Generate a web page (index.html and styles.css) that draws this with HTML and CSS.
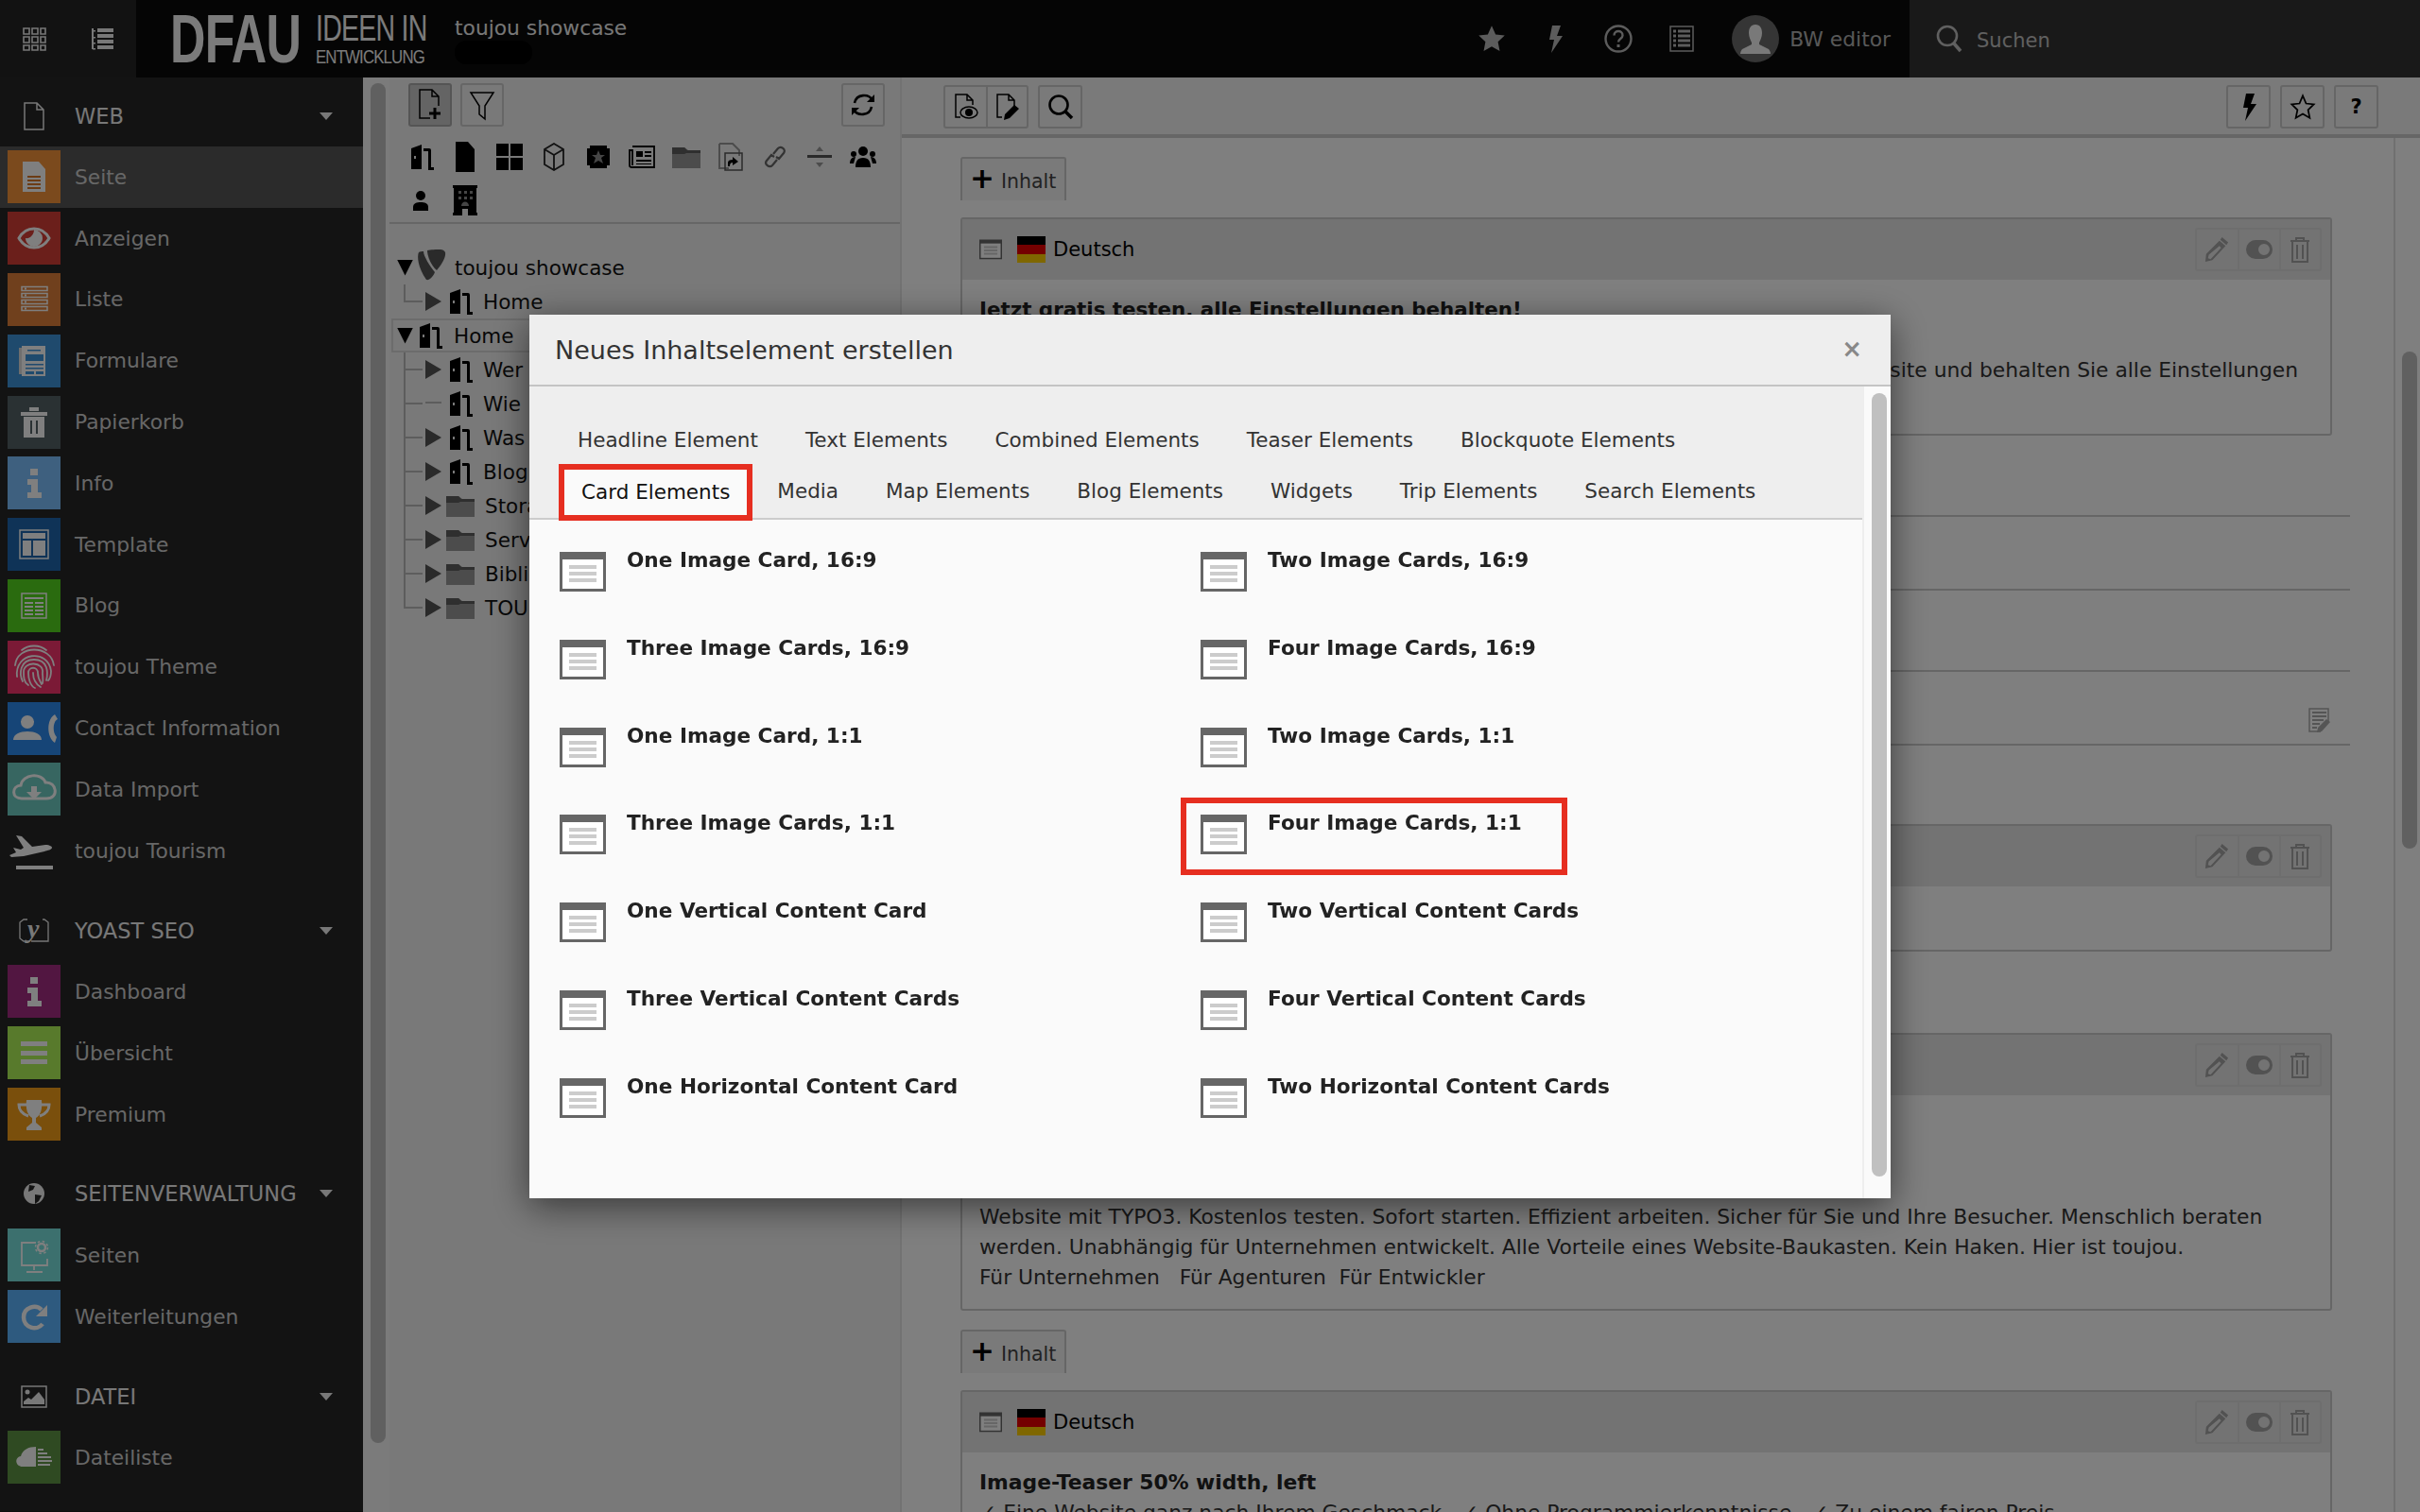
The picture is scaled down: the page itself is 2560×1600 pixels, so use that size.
FILE: index.html
```html
<!DOCTYPE html>
<html lang="de">
<head>
    <meta charset="UTF-8">
    <title>TYPO3 Backend - Neues Inhaltselement</title>
    <link rel="stylesheet" href="styles.css">
</head>
<body>
    <svg class="defs" width="0" height="0">
        <defs>
            <symbol id="door" viewBox="0 0 28 28"><path d="M0 27h4V5l11-4v26H0v-2zM7 13h2v3H7z" fill-rule="evenodd"/><path d="M17 5h6a2 2 0 0 1 2 2v18h3v3h-6V8h-5z"/></symbol>
            <symbol id="folder" viewBox="0 0 30 24"><path d="M0 2h13l4 3h13v19H0z" fill="#999"/><path d="M0 2h13l3 3h14v3H15l-2 1H0z" fill="#5f5f5f"/></symbol>
            <symbol id="content" viewBox="0 0 49 42"><rect x="1.5" y="1.5" width="46" height="39" fill="#fff" stroke="#666" stroke-width="3"/><rect y="0" width="49" height="8" fill="#666"/><path d="M10 16h29M10 23h29M10 30h29" stroke="#ccc" stroke-width="4"/></symbol>
            <symbol id="pencil" viewBox="0 0 28 30"><path d="M17 5l7 6L9 27l-8 2 1-9zM5 21l-1 4 3 1 12-13-2-2zM20 1l7 6-2 3-7-6z" fill-rule="evenodd"/></symbol>
            <symbol id="toggle" viewBox="0 0 28 20"><path d="M10 0h8a10 10 0 0 1 0 20h-8a10 10 0 0 1 0-20zm9 4a6 6 0 1 0 0 12 6 6 0 0 0 0-12z" fill-rule="evenodd"/></symbol>
            <symbol id="trash" viewBox="0 0 22 28"><path d="M1 5h20M7 5V2h8v3M3 5v22h16V5M8 9v15M14 9v15" fill="none" stroke="currentColor" stroke-width="2"/></symbol>
            <symbol id="info" viewBox="0 0 56 56"><path d="M24 13h8v7h-8zM21 24h11v14h4v6H21v-6h4v-8h-4z"/></symbol>
        </defs>
    </svg>

    <header class="topbar">
        <div class="top-switch">
            <svg class="top-switch-icon" viewBox="0 0 25 25" fill="none" stroke="currentColor" stroke-width="1.6"><path d="M1 1h6v6H1zM10 1h6v6h-6zM19 1h5v6h-5zM1 10h6v6H1zM10 10h6v6h-6zM19 10h5v6h-5zM1 19h6v5H1zM10 19h6v5h-6zM19 19h5v5h-5z"/></svg>
            <svg class="top-switch-icon" viewBox="0 0 25 25" fill="currentColor"><path d="M1 1h2v22H1zM2 3h3v1.500H2zM2 10h3v1.500H2zM2 16h3v1.500H2zM2 22h3v1.500H2zM7 1h17v4H7zM7 7h17v4H7zM7 13h17v4H7zM7 19h17v4H7z"/></svg>
        </div>
        <div class="logo">
            <span class="logo-big">DFAU</span>
            <span class="logo-small"><span class="logo-line1">IDEEN IN</span><span class="logo-line2">ENTWICKLUNG</span></span>
        </div>
        <div class="site-name">
            <span>toujou showcase</span>
            <span class="site-blob"></span>
        </div>
        <div class="top-tools">
            <span class="top-tool"><svg width="30" height="30" viewBox="0 0 24 24" fill="currentColor"><path d="M12 1l3.300 7.300 7.700.9-5.700 5.300 1.500 7.900-6.800-3.900-6.800 3.900 1.500-7.900L1 9.200l7.700-.9z"/></svg></span>
            <span class="top-tool"><svg width="30" height="30" viewBox="0 0 24 30" fill="currentColor"><path d="M9 1h9l-4 11h6L8 30l3-14H6z"/></svg></span>
            <span class="top-tool"><svg width="30" height="30" viewBox="0 0 30 30" fill="none" stroke="currentColor" stroke-width="2.400"><circle cx="15" cy="15" r="13.500"/><path d="M10.500 11.500c0-6 9-6 9 0 0 3.500-4.500 3.500-4.500 7"/><path d="M13.500 21h3v3h-3z" fill="currentColor" stroke="none"/></svg></span>
            <span class="top-tool"><svg width="26" height="30" viewBox="0 0 26 30" fill="none" stroke="currentColor" stroke-width="1.500"><path d="M1 2h24v26H1z"/><path d="M4 7h3M9 7h13M4 12h3M9 12h13M4 17h3M9 17h13M4 22h3M9 22h13" stroke-width="3"/></svg></span>
            <span class="avatar"><svg width="50" height="50" viewBox="0 0 50 50" fill="currentColor"><path d="M25 10c5 0 7 4 7 9 0 4-2 8-3 10v2l10 5c1 1 2 3 2 5H9c0-2 1-4 2-5l10-5v-2c-1-2-3-6-3-10 0-5 2-9 7-9z"/></svg></span>
            <span class="user-name">BW editor</span>
        </div>
        <div class="top-search">
            <svg width="28" height="30" viewBox="0 0 28 30" fill="none" stroke="currentColor" stroke-width="2.600"><circle cx="12" cy="12" r="10"/><path d="M19 20l7 8" stroke-width="3.500"/></svg>
            <span class="search-label">Suchen</span>
        </div>
    </header>

    <div class="shell">
        <nav class="sidebar">
            <div class="mod-group">
                <div class="mod-head">
                    <span class="head-icon"><svg width="24" height="30" viewBox="0 0 24 30" fill="none" stroke="currentColor" stroke-width="1.500"><path d="M2 1h13l7 7v21H2zM15 1v7h7"/></svg></span>
                    <span class="head-label">WEB</span><span class="caret"></span>
                </div>
                <a class="mod active"><span class="mod-icon c-page"><svg viewBox="0 0 56 56"><path d="M16 12h17l7 8v24H16z" fill="#fff"/><path d="M21 28h14M21 32h14M21 36h14M21 40h14" stroke="#d9782a" stroke-width="2"/></svg></span><span>Seite</span></a>
                <a class="mod"><span class="mod-icon c-view"><svg viewBox="0 0 56 56"><path d="M12 28c4-7 10-10 16-10s12 3 16 10c-4 7-10 10-16 10s-12-3-16-10z" fill="none" stroke="#fff" stroke-width="3"/><path d="M28 19a9 9 0 1 1-9 9c4 1 9-3 9-9z" fill="#fff"/></svg></span><span>Anzeigen</span></a>
                <a class="mod"><span class="mod-icon c-list"><svg viewBox="0 0 56 56" fill="none" stroke="#fff"><path d="M15 14.500h27v4H15zM15 21.500h27v4H15zM15 28.500h27v4H15zM15 35.500h27v4H15z" stroke-width="1.500"/><path d="M18 16.500h2M18 23.500h2M18 30.500h2M18 37.500h2" stroke-width="2"/></svg></span><span>Liste</span></a>
                <a class="mod"><span class="mod-icon c-form"><svg viewBox="0 0 56 56"><path d="M12 14h3v28h-3z" fill="#ddd"/><path d="M15 12h25v32H15z" fill="#fff"/><path d="M21 16h14v1.500H21zM19 21h19v7H19zM19 31h19v1.500H19zM19 35h19v1.500H19zM19 39h9v3h-9zM30 39h8v3h-8z" fill="#3e94da"/></svg></span><span>Formulare</span></a>
                <a class="mod"><span class="mod-icon c-trash"><svg viewBox="0 0 56 56"><path d="M14 17h28v4H14zM23 12h10v4H23zM17 22h22v22H17z" fill="#fff"/><path d="M25 26v14M31 26v14" stroke="#546266" stroke-width="2"/></svg></span><span>Papierkorb</span></a>
                <a class="mod"><span class="mod-icon c-info"><svg viewBox="0 0 56 56" fill="#fff"><use href="#info"/></svg></span><span>Info</span></a>
                <a class="mod"><span class="mod-icon c-tpl"><svg viewBox="0 0 56 56"><path d="M13 13h30v30H13z" fill="none" stroke="#fff" stroke-width="1.500"/><path d="M16 16h24v6H16zM16 24h9v16h-9zM27 24h13v16H27z" fill="#fff"/></svg></span><span>Template</span></a>
                <a class="mod"><span class="mod-icon c-blog"><svg viewBox="0 0 56 56" fill="none" stroke="#fff"><path d="M15 15h26v26H15z" stroke-width="1.500"/><path d="M18 20h20M18 25h9M29 25h9M18 29h9M29 29h9M18 33h9M29 33h9M18 37h9M29 37h9" stroke-width="2"/></svg></span><span>Blog</span></a>
                <a class="mod"><span class="mod-icon c-theme"><svg viewBox="0 0 56 56" fill="none" stroke="#fff" stroke-width="1.800" stroke-linecap="round"><path d="M15 10c7-6 19-6 26 0M8 26c2-22 38-22 41 0M10 38c-3-26 33-30 36-6 0 5-1 8-3 10M16 43c-4-8-3-23 12-23s15 14 13 22M22 47c-5-3-5-9-5-14 0-12 22-11 20 1 0 4 1 7 0 11M29 50c-5-2-7-10-7-16 0-7 10-7 10 0 0 6 3 10 4 12M27 34c0 6 3 12 8 15"/></svg></span><span>toujou Theme</span></a>
                <a class="mod"><span class="mod-icon c-contact"><svg viewBox="0 0 56 56" fill="#fff"><circle cx="21" cy="21" r="7"/><path d="M6 40c0-6 7-9 15-9s15 3 15 9z"/><path d="M50 13l3 5c-5 2-6 14-1 19l-2 6c-9-6-9-25 0-30z"/></svg></span><span>Contact Information</span></a>
                <a class="mod"><span class="mod-icon c-data"><svg viewBox="0 0 56 56"><path d="M15 38c-11 0-11-13-1-14 2-12 22-14 26-3 12-1 15 17 1 17z" fill="none" stroke="#fff" stroke-width="3"/><path d="M25 25h6v6h5l-8 8-8-8h5z" fill="#fff"/></svg></span><span>Data Import</span></a>
                <a class="mod"><span class="mod-icon c-plain"><svg viewBox="0 0 56 56" fill="#fff"><path d="M9 12l6 1 11 11 14-2c5 0 7 2 7 3 0 2-5 3-8 4l-22 5-13 1-2-2 7-3-3-5 4 1 4 1 3-2z"/><path d="M9 44h39v4H9z"/></svg></span><span>toujou Tourism</span></a>
            </div>
            <div class="mod-group">
                <div class="mod-head">
                    <span class="head-icon"><svg width="34" height="36" viewBox="0 0 34 36"><path d="M10 6H6L2 9v17l4 3h6M26 6h2l4 3v20H14" fill="none" stroke="currentColor" stroke-width="1.300"/><text x="10" y="25" font-family="Liberation Serif" font-style="italic" font-weight="bold" font-size="28" fill="currentColor">y</text></svg></span>
                    <span class="head-label">YOAST SEO</span><span class="caret"></span>
                </div>
                <a class="mod"><span class="mod-icon c-dash"><svg viewBox="0 0 56 56" fill="#fff"><use href="#info"/></svg></span><span>Dashboard</span></a>
                <a class="mod"><span class="mod-icon c-over"><svg viewBox="0 0 56 56" fill="#fff"><path d="M14 16h28v5H14zM14 26h28v5H14zM14 35h28v5H14z"/></svg></span><span>Übersicht</span></a>
                <a class="mod"><span class="mod-icon c-prem"><svg viewBox="0 0 56 56"><path d="M20 13h16c1 10-1 16-6 19v5l6 5v3H20v-3l6-5v-5c-5-3-7-9-6-19z" fill="#fff"/><path d="M20 18h-8c0 7 4 10 10 12M36 18h8c0 7-4 10-10 12" fill="none" stroke="#fff" stroke-width="3"/></svg></span><span>Premium</span></a>
            </div>
            <div class="mod-group">
                <div class="mod-head">
                    <span class="head-icon"><svg width="24" height="24" viewBox="0 0 24 24"><circle cx="12" cy="12" r="11" fill="currentColor"/><path d="M7 3l6 1-2 4-5 2zM13 13l7 1-3 6-4 3z" fill="#262626"/></svg></span>
                    <span class="head-label">SEITENVERWALTUNG</span><span class="caret"></span>
                </div>
                <a class="mod"><span class="mod-icon c-pages"><svg viewBox="0 0 56 56"><path d="M30 15H15v24h27v-7M28 39v5M20 46h17" fill="none" stroke="#fff" stroke-width="1.800"/><circle cx="36" cy="20" r="4" fill="none" stroke="#fff" stroke-width="2.500"/><circle cx="36" cy="20" r="6.500" fill="none" stroke="#fff" stroke-width="1.500" stroke-dasharray="2.500 2.600"/></svg></span><span>Seiten</span></a>
                <a class="mod"><span class="mod-icon c-redir"><svg viewBox="0 0 56 56"><path d="M36 21c-6-6-19-3-19 8s14 15 20 7" fill="none" stroke="#fff" stroke-width="4.500"/><path d="M30 28h12V16z" fill="#fff"/></svg></span><span>Weiterleitungen</span></a>
            </div>
            <div class="mod-group last">
                <div class="mod-head">
                    <span class="head-icon"><svg width="28" height="24" viewBox="0 0 28 24"><path d="M1 1h26v22H1z" fill="none" stroke="currentColor" stroke-width="1.500"/><circle cx="7" cy="7" r="2.500" fill="currentColor"/><path d="M3 20v-3l5-4 3 2 8-8 6 8v5z" fill="currentColor"/></svg></span>
                    <span class="head-label">DATEI</span><span class="caret"></span>
                </div>
                <a class="mod"><span class="mod-icon c-file"><svg viewBox="0 0 56 56" fill="#fff"><path d="M30 17v21H16c-8 0-9-10-2-11 2-7 8-10 16-10z"/><path d="M32 19h6v2h-6zM32 23h10v2H32zM32 27h14v2H32zM32 31h15v2H32zM32 35h13v2H32z"/></svg></span><span>Dateiliste</span></a>
            </div>
        </nav>

        <div class="side-scroll"><div class="side-thumb"></div></div>

        <aside class="tree-panel">
            <div class="tree-buttons">
                <div class="btn-row">
                    <span class="tbtn pressed"><svg width="26" height="34" viewBox="0 0 26 34" fill="none" stroke="#000" stroke-width="1.500"><path d="M13 31H2V1h13l7 7v10M15 1v7h7"/><path d="M18 20v12M12 26h12" stroke-width="3"/></svg></span>
                    <span class="tbtn"><svg width="28" height="34" viewBox="0 0 28 34" fill="none" stroke="#000" stroke-width="1.500"><path d="M2 4h24l-9 14v14l-6-5v-9z"/></svg></span>
                </div>
                <span class="tbtn wide"><svg width="28" height="28" viewBox="0 0 28 28" fill="none" stroke="#000" stroke-width="2.600"><path d="M5 12c2-10 15-10 19-3M23 16c-2 10-15 10-19 3"/><path d="M26 3v8h-8zM2 25v-8h8z" fill="#000" stroke="none"/></svg></span>
            </div>
            <div class="tree-types">
                <span class="ttype"><svg width="28" height="28"><use href="#door"/></svg></span>
                <span class="ttype"><svg width="22" height="32" viewBox="0 0 22 32"><path d="M1 0h13l7 8v24H1z"/></svg></span>
                <span class="ttype"><svg width="28" height="28" viewBox="0 0 28 28"><path d="M0 0h13v13H0zM15 0h13v13H15zM0 15h13v13H0zM15 15h13v13H15z"/></svg></span>
                <span class="ttype"><svg width="24" height="30" viewBox="0 0 24 30" fill="none" stroke="#222" stroke-width="1.800"><path d="M12 1l10 6v16l-10 6-10-6V7zM2 7l10 6 10-6M12 13v16"/></svg></span>
                <span class="ttype"><svg width="24" height="24" viewBox="0 0 24 24"><path d="M0 3h3V0h18v3h3v18h-3v3H3v-3H0z"/><path d="M12 5l2 5h5l-4 3 2 6-5-3-5 3 2-6-4-3h5z" fill="#8a8a8a"/></svg></span>
                <span class="ttype"><svg width="28" height="24" viewBox="0 0 28 24" fill="none" stroke="#000"><path d="M4 1h23v22H3c-2 0-2-1-2-2V5h3v16" stroke-width="1.800"/><path d="M8 6h7v6H8zM17 6h7v2h-7zM17 10h7v2h-7zM8 15h16v2H8zM8 19h16v1H8z" fill="#000" stroke="none"/></svg></span>
                <span class="ttype"><svg width="30" height="24"><use href="#folder"/></svg></span>
                <span class="ttype"><svg width="26" height="30" viewBox="0 0 26 30"><path d="M1 1h14l7 7v6M1 1v26h10" fill="none" stroke="#999" stroke-width="2"/><path d="M7 11h18v18H7z" fill="none" stroke="#555" stroke-width="1.500"/><path d="M10 25v-4c0-2 2-3 5-3v-3l6 5-6 4v-3c-2 0-3 1-3 4z"/></svg></span>
                <span class="ttype"><svg width="24" height="24" viewBox="0 0 24 24" fill="none" stroke="#666" stroke-width="2.200"><path d="M10 9l5-6c3-3 9 1 6 5l-5 6-3-2M14 15l-5 6c-3 3-9-1-6-5l5-6 3 2"/></svg></span>
                <span class="ttype"><svg width="26" height="24" viewBox="0 0 26 24"><path d="M0 10h26v3H0z" fill="#555"/><path d="M13 1l4 5H9zM13 23l-4-5h8z" fill="#999"/></svg></span>
                <span class="ttype"><svg width="28" height="22" viewBox="0 0 28 22"><circle cx="14" cy="5" r="5"/><circle cx="4" cy="8" r="3"/><circle cx="24" cy="8" r="3"/><path d="M6 22c0-6 2-10 8-10s8 4 8 10zM0 18c0-4 2-7 6-7l-2 7zM28 18c0-4-2-7-6-7l2 7z"/></svg></span>
                <span class="ttype"><svg width="18" height="22" viewBox="0 0 18 22"><circle cx="9" cy="6" r="5"/><path d="M1 22v-4c0-4 4-5 8-5s8 1 8 5v4z"/></svg></span>
                <span class="ttype"><svg width="26" height="32" viewBox="0 0 26 32"><path d="M0 0h26v3h-1v26h1v3H16v-7h-6v7H0v-3h1V3H0z"/><path d="M6 6h3v3H6zM12 6h3v3h-3zM18 6h3v3h-3zM6 12h3v3H6zM12 12h3v3h-3zM18 12h3v3h-3zM9 22c0-6 8-6 8 0z" fill="#8a8a8a"/></svg></span>
            </div>
            <div class="tree">
                <div class="tree-row root"><span class="toggle open"></span><svg class="typo-logo" width="32" height="36" viewBox="0 0 32 36"><path d="M3 4c-2 4-1 16 8 29 3 1 7-3 9-8C15 19 8 8 8 3c-2 0-4 0-5 1z" fill="#555"/><path d="M12 2c0 6 4 16 10 21 6-7 10-15 9-19-1-2-3-3-5-3-4 0-11 0-14 1z" fill="#555"/></svg><span>toujou showcase</span></div>
                <div class="tree-row child"><span class="twig"></span><span class="toggle shut"></span><svg class="door" width="28" height="28"><use href="#door"/></svg><span class="tree-label">Home</span></div>
                <div class="tree-row root selected"><span class="toggle open"></span><svg class="door-root" width="28" height="28"><use href="#door"/></svg><span>Home</span></div>
                <div class="tree-row child mid"><span class="twig"></span><span class="toggle shut"></span><svg class="door" width="28" height="28"><use href="#door"/></svg><span class="tree-label">Wer</span></div>
                <div class="tree-row child mid"><span class="twig"></span><span class="toggle none"></span><svg class="door" width="28" height="28"><use href="#door"/></svg><span class="tree-label">Wie</span></div>
                <div class="tree-row child mid"><span class="twig"></span><span class="toggle shut"></span><svg class="door" width="28" height="28"><use href="#door"/></svg><span class="tree-label">Was</span></div>
                <div class="tree-row child mid"><span class="twig"></span><span class="toggle shut"></span><svg class="door" width="28" height="28"><use href="#door"/></svg><span class="tree-label">Blog</span></div>
                <div class="tree-row child mid"><span class="twig"></span><span class="toggle shut"></span><svg class="door" width="30" height="24"><use href="#folder"/></svg><span class="tree-label">Storage</span></div>
                <div class="tree-row child mid"><span class="twig"></span><span class="toggle shut"></span><svg class="door" width="30" height="24"><use href="#folder"/></svg><span class="tree-label">Service</span></div>
                <div class="tree-row child mid"><span class="twig"></span><span class="toggle shut"></span><svg class="door" width="30" height="24"><use href="#folder"/></svg><span class="tree-label">Bibliothek</span></div>
                <div class="tree-row child"><span class="twig"></span><span class="toggle shut"></span><svg class="door" width="30" height="24"><use href="#folder"/></svg><span class="tree-label">TOUR</span></div>
            </div>
        </aside>

        <main class="main">
            <div class="docheader">
                <div class="btn-group">
                    <span class="dbtn"><svg width="26" height="28" viewBox="0 0 26 28"><path d="M7 25H2V1h12l6 6v5M14 1v6h6" fill="none" stroke="#000" stroke-width="1.500"/><ellipse cx="16" cy="20" rx="9" ry="6" fill="none" stroke="#000" stroke-width="1.500"/><circle cx="16" cy="20" r="4"/></svg></span>
                    <span class="dbtn"><svg width="26" height="28" viewBox="0 0 26 28"><path d="M7 25H2V1h12l6 6v6M14 1v6h6" fill="none" stroke="#000" stroke-width="1.500"/><path d="M20 12l5 4-10 10-6 2 1-6z"/></svg></span>
                </div>
                <div class="btn-group"><span class="dbtn"><svg width="28" height="28" viewBox="0 0 28 28" fill="none" stroke="#000" stroke-width="2.600"><circle cx="12" cy="12" r="9.500"/><path d="M19 19l7 7" stroke-width="3.500"/></svg></span></div>
                <div class="btn-group push"><span class="dbtn"><svg width="22" height="30" viewBox="0 0 22 30"><path d="M8 1h9l-4 11h6L7 30l3-14H5z"/></svg></span></div>
                <div class="btn-group"><span class="dbtn"><svg width="28" height="28" viewBox="0 0 24 24" fill="none" stroke="#000" stroke-width="1.500"><path d="M12 2l3 7 7 .8-5.200 5 1.500 7.200-6.300-3.600L5.700 22l1.500-7.200-5.200-5L9 9z"/></svg></span></div>
                <div class="btn-group"><span class="dbtn help">?</span></div>
            </div>
            <div class="main-body">
                <div class="page-content">
                    <span class="add-btn"><b>+</b><span class="add-label">Inhalt</span></span>
                    <section class="panel panel-one">
                        <div class="panel-head">
                            <svg class="ct-icon" width="24" height="26"><use href="#content"/></svg>
                            <span class="flag"></span>
                            <span class="lang">Deutsch</span>
                            <span class="actions">
                                <span class="act"><svg width="26" height="28" fill="#a4a4a4"><use href="#pencil"/></svg></span>
                                <span class="act"><svg width="28" height="20" fill="#a4a4a4"><use href="#toggle"/></svg></span>
                                <span class="act"><svg class="act-trash" width="22" height="28"><use href="#trash"/></svg></span>
                            </span>
                        </div>
                        <div class="panel-text">
                            <p class="strong">Jetzt gratis testen, alle Einstellungen behalten!</p>
                            <p>&nbsp;</p>
                            <p class="line-right">Starten Sie kostenlos und ohne Risiko. Bei Gefallen buchen Sie Ihre Website und behalten Sie alle Einstellungen</p>
                        </div>
                    </section>
                    <div class="rules">
                        <div class="rule r78"></div>
                        <div class="rule r86"></div>
                        <div class="rule r78">
                            <svg class="note-icon" width="24" height="26" viewBox="0 0 24 26" fill="none" stroke="#aaa" stroke-width="1.500"><path d="M13 25H1V1h20v13"/><path d="M4 5h15M4 9h15M4 13h12M4 17h8M4 21h5" stroke-width="2"/><path d="M19 12l4 3-9 10-5 1 1-5z" fill="#aaa" stroke="none"/></svg>
                        </div>
                        <div class="rule end"></div>
                    </div>
                    <section class="panel panel-two">
                        <div class="panel-head">
                            <svg class="ct-icon" width="24" height="26"><use href="#content"/></svg>
                            <span class="flag"></span>
                            <span class="lang">Deutsch</span>
                            <span class="actions">
                                <span class="act"><svg width="26" height="28" fill="#a4a4a4"><use href="#pencil"/></svg></span>
                                <span class="act"><svg width="28" height="20" fill="#a4a4a4"><use href="#toggle"/></svg></span>
                                <span class="act"><svg class="act-trash" width="22" height="28"><use href="#trash"/></svg></span>
                            </span>
                        </div>
                    </section>
                    <section class="panel panel-three">
                        <div class="panel-head">
                            <svg class="ct-icon" width="24" height="26"><use href="#content"/></svg>
                            <span class="flag"></span>
                            <span class="lang">Deutsch</span>
                            <span class="actions">
                                <span class="act"><svg width="26" height="28" fill="#a4a4a4"><use href="#pencil"/></svg></span>
                                <span class="act"><svg width="28" height="20" fill="#a4a4a4"><use href="#toggle"/></svg></span>
                                <span class="act"><svg class="act-trash" width="22" height="28"><use href="#trash"/></svg></span>
                            </span>
                        </div>
                        <div class="panel-text at-end">
                            <p>Website mit TYPO3. Kostenlos testen. Sofort starten. Effizient arbeiten. Sicher für Sie und Ihre Besucher. Menschlich beraten</p>
                            <p>werden. Unabhängig für Unternehmen entwickelt. Alle Vorteile eines Website-Baukasten. Kein Haken. Hier ist toujou.</p>
                            <p>Für Unternehmen &nbsp; Für Agenturen &nbsp;Für Entwickler</p>
                        </div>
                    </section>
                    <span class="add-btn after"><b>+</b><span class="add-label">Inhalt</span></span>
                    <section class="panel panel-four">
                        <div class="panel-head">
                            <svg class="ct-icon" width="24" height="26"><use href="#content"/></svg>
                            <span class="flag"></span>
                            <span class="lang">Deutsch</span>
                            <span class="actions">
                                <span class="act"><svg width="26" height="28" fill="#a4a4a4"><use href="#pencil"/></svg></span>
                                <span class="act"><svg width="28" height="20" fill="#a4a4a4"><use href="#toggle"/></svg></span>
                                <span class="act"><svg class="act-trash" width="22" height="28"><use href="#trash"/></svg></span>
                            </span>
                        </div>
                        <div class="panel-text">
                            <p class="strong">Image-Teaser 50% width, left</p>
                            <p>✓ Eine Website ganz nach Ihrem Geschmack &nbsp; ✓ Ohne Programmierkenntnisse &nbsp; ✓ Zu einem fairen Preis</p>
                        </div>
                    </section>
                </div>
                <div class="main-scroll"><div class="main-thumb"></div></div>
            </div>
        </main>
    </div>

    <div class="backdrop"></div>

    <div class="modal">
        <div class="modal-head">
            <h4>Neues Inhaltselement erstellen</h4>
            <span class="close">×</span>
        </div>
        <div class="modal-body">
            <div class="modal-content">
                <div class="tabs">
                    <div class="tab-row">
                        <span class="tab">Headline Element</span>
                        <span class="tab">Text Elements</span>
                        <span class="tab">Combined Elements</span>
                        <span class="tab">Teaser Elements</span>
                        <span class="tab">Blockquote Elements</span>
                    </div>
                    <div class="tab-row second">
                        <span class="tab current">Card Elements</span>
                        <span class="tab">Media</span>
                        <span class="tab">Map Elements</span>
                        <span class="tab">Blog Elements</span>
                        <span class="tab">Widgets</span>
                        <span class="tab">Trip Elements</span>
                        <span class="tab">Search Elements</span>
                    </div>
                </div>
                <div class="cards">
                    <div class="card"><svg width="49" height="42"><use href="#content"/></svg><b>One Image Card, 16:9</b></div>
                    <div class="card"><svg width="49" height="42"><use href="#content"/></svg><b>Two Image Cards, 16:9</b></div>
                    <div class="card"><svg width="49" height="42"><use href="#content"/></svg><b>Three Image Cards, 16:9</b></div>
                    <div class="card"><svg width="49" height="42"><use href="#content"/></svg><b>Four Image Cards, 16:9</b></div>
                    <div class="card"><svg width="49" height="42"><use href="#content"/></svg><b>One Image Card, 1:1</b></div>
                    <div class="card"><svg width="49" height="42"><use href="#content"/></svg><b>Two Image Cards, 1:1</b></div>
                    <div class="card"><svg width="49" height="42"><use href="#content"/></svg><b>Three Image Cards, 1:1</b></div>
                    <div class="card marked"><svg width="49" height="42"><use href="#content"/></svg><b>Four Image Cards, 1:1</b></div>
                    <div class="card"><svg width="49" height="42"><use href="#content"/></svg><b>One Vertical Content Card</b></div>
                    <div class="card"><svg width="49" height="42"><use href="#content"/></svg><b>Two Vertical Content Cards</b></div>
                    <div class="card"><svg width="49" height="42"><use href="#content"/></svg><b>Three Vertical Content Cards</b></div>
                    <div class="card"><svg width="49" height="42"><use href="#content"/></svg><b>Four Vertical Content Cards</b></div>
                    <div class="card"><svg width="49" height="42"><use href="#content"/></svg><b>One Horizontal Content Card</b></div>
                    <div class="card"><svg width="49" height="42"><use href="#content"/></svg><b>Two Horizontal Content Cards</b></div>
                </div>
            </div>
            <div class="modal-scroll"><div class="modal-thumb"></div></div>
        </div>
    </div>
</body>
</html>
```

FILE: styles.css
```css
* {
    box-sizing: border-box;
}
html, body {
    margin: 0;
    height: 1600px;
    overflow: hidden;
}
body {
    font-family: "DejaVu Sans", Verdana, sans-serif;
    font-size: 21.8px;
    color: #333;
    background: #fefefe;
}
.defs {
    display: block;
    height: 0;
}
p {
    margin: 0;
}

/* Topbar */
.topbar {
    display: flex;
    height: 82px;
    background: #0a0a0a;
    color: #e0e0e0;
}
.top-switch {
    display: flex;
    align-items: center;
    gap: 47px;
    width: 144px;
    padding-left: 24px;
    background: #242424;
    color: #f0f0f0;
}
.top-switch-icon {
    width: 25px;
    height: 25px;
}
.logo {
    display: flex;
    width: 336px;
    padding: 10px 0 0 36px;
    color: #f6f6f6;
    font-family: "Liberation Sans", Arial, sans-serif;
    white-space: nowrap;
}
.logo-big {
    width: 154px;
    font-size: 72px;
    line-height: 62px;
    font-weight: bold;
    letter-spacing: -1px;
    transform: scaleX(.72);
    transform-origin: left;
}
.logo-small {
    display: flex;
    flex-direction: column;
}
.logo-line1 {
    font-size: 38px;
    line-height: 40px;
    letter-spacing: -1px;
    transform: scaleX(.75);
    transform-origin: left;
}
.logo-line2 {
    font-size: 20px;
    line-height: 20px;
    letter-spacing: -1px;
    transform: scaleX(.84);
    transform-origin: left;
}
.site-name {
    display: flex;
    flex-direction: column;
    padding: 17px 0 0 1px;
    line-height: 26px;
    color: #eee;
}
.site-blob {
    width: 82px;
    height: 25px;
    background: #000;
    border-radius: 12px;
}
.top-tools {
    display: flex;
    align-items: center;
    margin-left: auto;
    padding-right: 20px;
    color: #b8b8b8;
}
.top-tool {
    display: flex;
    justify-content: center;
    width: 67px;
}
.avatar {
    display: flex;
    width: 50px;
    height: 50px;
    margin: 0 11px 0 20px;
    border-radius: 50%;
    overflow: hidden;
    background: #6a6a6a;
    color: #f2f2f2;
}
.user-name {
    color: #b0b0b0;
}
.top-search {
    display: flex;
    align-items: center;
    gap: 15px;
    width: 540px;
    padding-left: 28px;
    background: #333;
    color: #c0c0c0;
}
.search-label {
    margin-top: 3px;
    font-size: 21px;
}

/* Layout */
.shell {
    display: flex;
    height: 1518px;
}

/* Module menu */
.sidebar {
    width: 384px;
    background: #1c1c1c;
    color: #d6d6d6;
    flex: none;
}
.mod-group {
    padding: 9.5px 0 10px;
    background: #262626;
}
.mod-group.last {
    padding-bottom: 24px;
}
.mod-group:first-child {
    padding-top: 8px;
}
.mod-head {
    display: flex;
    align-items: center;
    height: 65px;
    color: #f0f0f0;
}
.head-icon {
    display: flex;
    justify-content: center;
    width: 72px;
    margin-right: 7px;
}
.head-label {
    font-size: 22.5px;
}
.caret {
    width: 0;
    height: 0;
    margin-left: auto;
    margin-right: 32px;
    border-left: 7px solid transparent;
    border-right: 7px solid transparent;
    border-top: 8px solid #f0f0f0;
}
.mod {
    display: flex;
    align-items: center;
    height: 64.800px;
    padding-left: 8px;
    color: #cfcfcf;
}
.mod.active {
    background: #565656;
}
.mod-icon {
    display: block;
    width: 56px;
    height: 56px;
    margin-right: 15px;
}
.mod-icon svg {
    display: block;
    width: 56px;
    height: 56px;
}
.c-page { background: #f7953a; }
.c-view { background: #d63e36; }
.c-list { background: #e0803a; }
.c-form { background: #3e94da; }
.c-trash { background: #546266; }
.c-info { background: #7cc0ff; }
.c-tpl { background: #1e66ae; }
.c-blog { background: #54d61e; }
.c-theme { background: #f6346c; }
.c-contact { background: #2c8aee; }
.c-data { background: #6eccc2; }
.c-dash { background: #a42c82; }
.c-over { background: #b0f458; }
.c-prem { background: #f49e18; }
.c-pages { background: #78e0dc; }
.c-redir { background: #5cb4ff; }
.c-file { background: #5e9444; }

/* Scrollbars */
.side-scroll {
    width: 28px;
    flex: none;
    padding: 6px 4px 0 8px;
    background: #f6f6f6;
}
.side-thumb {
    width: 16px;
    height: 1439px;
    border-radius: 8px;
    background: #c0c0c0;
}
.main-scroll {
    width: 28px;
    flex: none;
    padding: 226px 5px 0 7px;
    border-left: 2px solid #e0e0e0;
}
.main-thumb {
    width: 16px;
    height: 526px;
    border-radius: 8px;
    background: #c0c0c0;
}

/* Page tree */
.tree-panel {
    width: 542px;
    flex: none;
    background: #f2f2f2;
    border-right: 2px solid #e4e4e4;
}
.tree-buttons {
    display: flex;
    justify-content: space-between;
    height: 61px;
    padding: 6px 16px 0 20px;
}
.btn-row {
    display: flex;
    gap: 9px;
}
.tbtn {
    display: flex;
    align-items: center;
    justify-content: center;
    width: 46px;
    height: 46px;
    border: 2px solid #ccc;
    border-radius: 3px;
}
.tbtn.pressed {
    background: #c8c8c8;
    border-color: #aaa;
}
.tree-types {
    display: grid;
    grid-template-columns: repeat(11, 46.800px);
    height: 94px;
    padding-left: 10px;
    border-bottom: 2px solid #ccc;
}
.ttype {
    display: flex;
    align-items: center;
    justify-content: center;
    height: 46px;
}
.tree {
    padding-top: 28px;
    font-size: 21.5px;
    color: #111;
    white-space: nowrap;
}
.tree-row {
    display: flex;
    align-items: center;
    height: 36px;
    margin-left: 2px;
}
.tree-row.root {
    padding-left: 6px;
}
.tree-row.selected {
    border: 2px solid #d8d8d8;
    padding-left: 4px;
}
.tree-row.child {
    padding-left: 13px;
}
.tree-row.mid {
    background: linear-gradient(#bbb, #bbb) 13px 0 / 2px 100% no-repeat;
}
.twig {
    align-self: flex-start;
    width: 20px;
    height: 19px;
    margin-right: 3px;
    border-left: 2px solid #bbb;
    border-bottom: 2px solid #bbb;
}
.toggle {
    flex: none;
    width: 17px;
    height: 20px;
}
.toggle.open {
    height: 17px;
    background: #000;
    clip-path: polygon(0 0, 100% 0, 50% 100%);
}
.toggle.shut {
    background: #555;
    clip-path: polygon(0 0, 100% 50%, 0 100%);
}
.toggle.none {
    background: linear-gradient(#bbb, #bbb) 0 8px / 100% 2px no-repeat;
}
.door {
    margin: 0 11px 0 5px;
    flex: none;
}
.typo-logo {
    margin: 0 9px 4px 3px;
}
.door-root {
    margin: 0 12px 0 3px;
}

/* Main area */
.main {
    flex: 1;
    display: flex;
    flex-direction: column;
    min-width: 0;
}
.docheader {
    display: flex;
    gap: 10px;
    height: 64px;
    padding: 8px 44px 0 44px;
    background: #f4f4f4;
    border-bottom: 4px solid #ccc;
}
.btn-group {
    display: flex;
    height: 46px;
    border: 2px solid #ccc;
    border-radius: 3px;
}
.btn-group.push {
    margin-left: auto;
}
.dbtn {
    display: flex;
    align-items: center;
    justify-content: center;
    width: 43px;
}
.dbtn + .dbtn {
    border-left: 2px solid #ccc;
}
.dbtn.help {
    font-weight: bold;
    color: #000;
    font-size: 21px;
}
.main-body {
    flex: 1;
    display: flex;
    min-height: 0;
    background: #fefefe;
}
.page-content {
    flex: 1;
    min-width: 0;
    padding: 20px 64px 0 62px;
    overflow: hidden;
}
.add-btn {
    display: flex;
    align-items: center;
    width: 112px;
    height: 46px;
    padding-left: 9px;
    border: 2px solid #ccc;
    border-bottom: 0;
    border-radius: 3px 3px 0 0;
    background: #f4f4f4;
    font-size: 20.500px;
    color: #444;
}
.add-btn b {
    margin: -4px 7px 0 -1px;
    font-size: 31px;
    color: #000;
}
.add-label {
    margin-top: 3px;
}
.add-btn.after {
    margin-top: 20px;
}
.panel {
    display: flex;
    flex-direction: column;
    width: 1451px;
    margin-top: 18px;
    border: 2px solid #ccc;
    border-radius: 3px;
}
.panel-one { height: 231px; }
.panel-two { height: 135px; margin-top: 83px; }
.panel-three { height: 294px; margin-top: 86px; }
.panel-four { height: 300px; }
.panel-head {
    display: flex;
    align-items: center;
    flex: none;
    height: 64px;
    padding-left: 18px;
    background: #e6e6e6;
    color: #000;
}
.ct-icon {
    margin-right: 16px;
}
.flag {
    width: 30px;
    height: 28px;
    margin-right: 8px;
    background: linear-gradient(#000 33.3%, #e80000 33.3% 66.6%, #ffce00 66.6%);
}
.lang {
    font-size: 21px;
}
.actions {
    display: flex;
    height: 46px;
    margin-left: auto;
    margin-right: 9px;
    border: 2px solid #dcdcdc;
    border-radius: 3px;
}
.act {
    display: flex;
    align-items: center;
    justify-content: center;
    width: 43.500px;
}
.act + .act {
    border-left: 2px solid #dcdcdc;
}
.act-trash {
    color: #a4a4a4;
}
.panel-text {
    flex: 1;
    padding: 16px 18px 17px;
    line-height: 32px;
    color: #333;
    white-space: nowrap;
}
.panel-text.at-end {
    display: flex;
    flex-direction: column;
    justify-content: flex-end;
}
.strong {
    font-weight: bold;
    color: #222;
}
.panel-one .strong {
    font-size: 21.400px;
}
.line-right {
    text-align: right;
    padding-right: 16px;
}
.rules {
    margin-top: 84px;
    margin-right: -18px;
}
.rule {
    display: flex;
    justify-content: flex-end;
    align-items: flex-end;
    border-top: 2px solid #ccc;
    padding: 0 20px 12px 0;
}
.rule.end {
    padding: 0;
}
.r78 { height: 78px; }
.r86 { height: 86px; }

/* Dialog */
.backdrop {
    position: fixed;
    inset: 0;
    background: rgba(0, 0, 0, .5);
}
.modal {
    position: fixed;
    left: 560px;
    top: 333px;
    display: flex;
    flex-direction: column;
    width: 1440px;
    height: 935px;
    background: #fafafa;
    box-shadow: 0 8px 36px rgba(0, 0, 0, .55);
}
.modal-head {
    display: flex;
    align-items: center;
    justify-content: space-between;
    flex: none;
    height: 76px;
    padding: 0 30px 0 27px;
    background: #eee;
    border-bottom: 2px solid #c4c4c4;
}
.modal-head h4 {
    margin: 0;
    font-size: 27px;
    font-weight: normal;
    color: #333;
}
.close {
    margin-top: -3px;
    font-size: 26px;
    line-height: 20px;
    font-weight: bold;
    color: #888;
}
.modal-body {
    flex: 1;
    display: flex;
    min-height: 0;
}
.modal-content {
    flex: 1;
    min-width: 0;
}
.tabs {
    padding: 29px 0 0 26px;
    background: #eee;
    border-bottom: 2px solid #ccc;
}
.tab-row {
    display: flex;
    height: 54px;
}
.tab-row.second {
    height: 56px;
}
.tab {
    padding: 1px 25px 0;
    line-height: 54px;
    color: #333;
    font-size: 21.500px;
    white-space: nowrap;
}
.tab.current {
    height: 60px;
    margin: -1px 1px 0 5px;
    padding: 0 18px;
    line-height: 48px;
    border: 6px solid #e62e20;
    background: #fafafa;
    color: #111;
}
.cards {
    display: grid;
    grid-template-columns: 678px 1fr;
    grid-auto-rows: 92.800px;
    padding: 34px 0 0 32px;
}
.card {
    display: flex;
    gap: 22px;
    position: relative;
}
.card svg {
    flex: none;
}
.card b {
    margin-top: -1px;
    line-height: 20px;
    font-size: 21.600px;
    color: #222;
}
.card.marked::after {
    content: "";
    position: absolute;
    left: -21px;
    top: -18px;
    width: 409px;
    height: 82px;
    box-sizing: border-box;
    border: 6px solid #e62e20;
}
.modal-scroll {
    width: 30px;
    flex: none;
    padding: 7px 6px 0 8px;
    border-left: 2px solid #eee;
}
.modal-thumb {
    width: 16px;
    height: 829px;
    border-radius: 8px;
    background: #c0c0c0;
}
```
